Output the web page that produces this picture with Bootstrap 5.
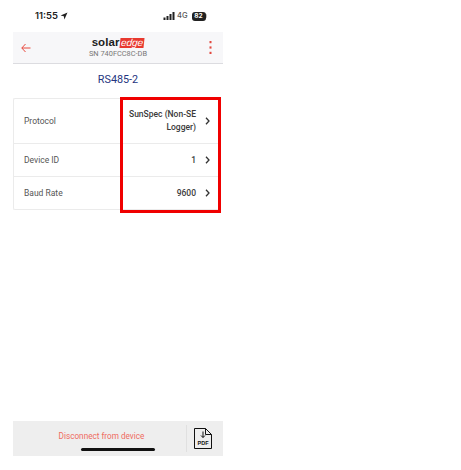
<!DOCTYPE html>
<html lang="en">
  <head>
    <meta charset="UTF-8" />
    <meta name="viewport" content="width=device-width, initial-scale=1.0" />
    <title>RS485-2</title>
    <link href="https://cdn.jsdelivr.net/npm/bootstrap@5.3.0/dist/css/bootstrap.min.css" rel="stylesheet" />
    <style>
      html, body { height: 470px; overflow: hidden; }
      body { background: #fff; font-family: Roboto, "Liberation Sans", sans-serif; color: #444; }
      /* phone screen */
      .phone-shell { width: 210px; height: 456px; margin-left: 13px; position: relative; }
      .status-row { height: 32px; padding: 0 16px 0 22px; font-family: Inter, "Liberation Sans", sans-serif; color: #222; }
      .status-time { font-size: 9.5px; font-weight: 600; margin-right: 2px; }
      .status-net { font-size: 7.5px; color: #555; font-weight: 500; margin: 0 4px 0 2px; }
      .batt-pill { background: #222; color: #fff; border-radius: 3px; font-size: 6.5px; line-height: 9px; width: 14px; text-align: center; font-weight: 700; }
      .batt-tip { width: 1.5px; height: 4px; background: #bbb; border-radius: 0 1px 1px 0; }
      .top-bar { height: 32px; background: #f7f7f9; border-bottom: 1px solid #dcdce0; padding: 0 11px 0 8px; }
      .brand-col { margin-right: 4px; }
      .brand-solar { font-family: "Liberation Sans", sans-serif; font-weight: 700; font-size: 11.5px; color: #1d1d1d; letter-spacing: .1px; }
      .brand-edge { font-family: "Liberation Sans", sans-serif; font-weight: 400; font-style: italic; font-size: 10px; color: #fff; background: #e8392f; padding: 0 1px; line-height: 10px; margin-left: .5px; transform: skewX(-6deg); }
      .brand-sn { font-size: 7.4px; color: #777; line-height: 8px; margin-top: 2px; }
      .page-title { color: #253580; font-size: 10.8px; height: 34px; line-height: 31px; margin: 0; font-weight: 400; }
      .settings-box { border: 1px solid #ebebeb; border-right: 0; border-radius: 2px 0 0 2px; margin-right: 3px; }
      .setting-row { padding: 0 10px 0 10px; font-size: 8.5px; color: #555; border-bottom: 1px solid #ebebeb; }
      .setting-row:last-child { border-bottom: 0; height: 32px; }
      .row-tall { height: 45px; }
      .row-short { height: 33px; }
      .setting-val { color: #3a3a3a; font-weight: 500; text-align: right; line-height: 13px; width: 72px; }
      .setting-chev { margin-left: 9px; flex: none; }
      .red-frame { position: absolute; left: 107px; top: 97px; width: 101px; height: 116px; border: 3px solid #f00000; }
      .bottom-bar { position: absolute; left: 0; right: 0; top: 421px; height: 35px; background: #eeeeee; }
      .disconnect-txt { color: #ef6a5f; font-size: 8.2px; width: 173px; text-align: center; padding: 0 0 4px 4px; }
      .pdf-cell { border-left: 1px solid #e0e0e0; height: 27px; width: 37px; padding-left: 7px; }
      .pdf-tag { position: absolute; left: 0; right: 0; top: 11.5px; text-align: center; font-size: 5.5px; font-weight: 700; color: #111; line-height: 6px; font-family: "Liberation Sans", sans-serif; }
      .home-bar { position: absolute; left: 68px; top: 448px; width: 74px; height: 3px; background: #111; border-radius: 2px; }
    </style>
  </head>
  <body>
    <div class="phone-shell">
      <!-- iOS status bar -->
      <div class="status-row d-flex align-items-center justify-content-between">
        <div class="d-flex align-items-center">
          <span class="status-time">11:55</span>
          <svg width="8" height="8" viewBox="0 0 8 8"><path d="M7.5.5 .6 3.6l3.2.6.6 3.3z" fill="#222" /></svg>
        </div>
        <div class="d-flex align-items-center">
          <svg width="12" height="8" viewBox="0 0 11 8"><g fill="#222"><rect x="0" y="5.5" width="2" height="2.5" /><rect x="3" y="4" width="2" height="4" /><rect x="6" y="2" width="2" height="6" /><rect x="9" y="0" width="2" height="8" /></g></svg>
          <span class="status-net">4G</span>
          <span class="batt-pill">82</span>
          <span class="batt-tip"></span>
        </div>
      </div>

      <!-- App header -->
      <div class="top-bar d-flex align-items-center justify-content-between">
        <svg width="10" height="10" viewBox="0 0 10 10" fill="none" stroke="#e8483d" stroke-width="1"><path d="M9.5 5H.8M4.5 1 .8 5l3.7 4" /></svg>
        <div class="brand-col d-flex flex-column align-items-center">
          <div class="d-flex align-items-center lh-1">
            <span class="brand-solar">solar</span><span class="brand-edge">edge</span>
          </div>
          <div class="brand-sn">SN 740FCC8C-DB</div>
        </div>
        <svg width="3" height="13" viewBox="0 0 3 13" fill="#e2483e"><rect x="0.5" y="0" width="2" height="2.2" /><rect x="0.5" y="5.4" width="2" height="2.2" /><rect x="0.5" y="10.8" width="2" height="2.2" /></svg>
      </div>

      <h1 class="page-title text-center">RS485-2</h1>

      <div class="settings-box">
        <div class="setting-row row-tall d-flex align-items-center justify-content-between">
          <span>Protocol</span>
          <div class="d-flex align-items-center">
            <div class="setting-val">SunSpec (Non-SE Logger)</div>
            <svg class="setting-chev" width="5" height="8" viewBox="0 0 5 8" fill="none" stroke="#333" stroke-width="1.3"><path d="m1 .8 3 3.2-3 3.2" /></svg>
          </div>
        </div>
        <div class="setting-row row-short d-flex align-items-center justify-content-between">
          <span>Device ID</span>
          <div class="d-flex align-items-center">
            <div class="setting-val">1</div>
            <svg class="setting-chev" width="5" height="8" viewBox="0 0 5 8" fill="none" stroke="#333" stroke-width="1.3"><path d="m1 .8 3 3.2-3 3.2" /></svg>
          </div>
        </div>
        <div class="setting-row row-short d-flex align-items-center justify-content-between">
          <span>Baud Rate</span>
          <div class="d-flex align-items-center">
            <div class="setting-val">9600</div>
            <svg class="setting-chev" width="5" height="8" viewBox="0 0 5 8" fill="none" stroke="#333" stroke-width="1.3"><path d="m1 .8 3 3.2-3 3.2" /></svg>
          </div>
        </div>
      </div>

      <!-- Highlight drawn over the values column -->
      <div class="red-frame"></div>

      <div class="bottom-bar d-flex align-items-center">
        <div class="disconnect-txt">Disconnect from device</div>
        <div class="pdf-cell d-flex align-items-center">
          <div class="position-relative">
            <svg class="d-block" width="18" height="21" viewBox="0 0 18 21" fill="none" stroke="#111" stroke-width="1"><path d="M.5.5h11l6 6v14H.5zM11.5.5v6h6" /><path d="M9 3.5v6M7 7.5l2 2 2-2" /></svg>
            <div class="pdf-tag">PDF</div>
          </div>
        </div>
      </div>
      <div class="home-bar"></div>
    </div>
    <script src="https://cdn.jsdelivr.net/npm/bootstrap@5.3.0/dist/js/bootstrap.bundle.min.js"></script>
  </body>
</html>
